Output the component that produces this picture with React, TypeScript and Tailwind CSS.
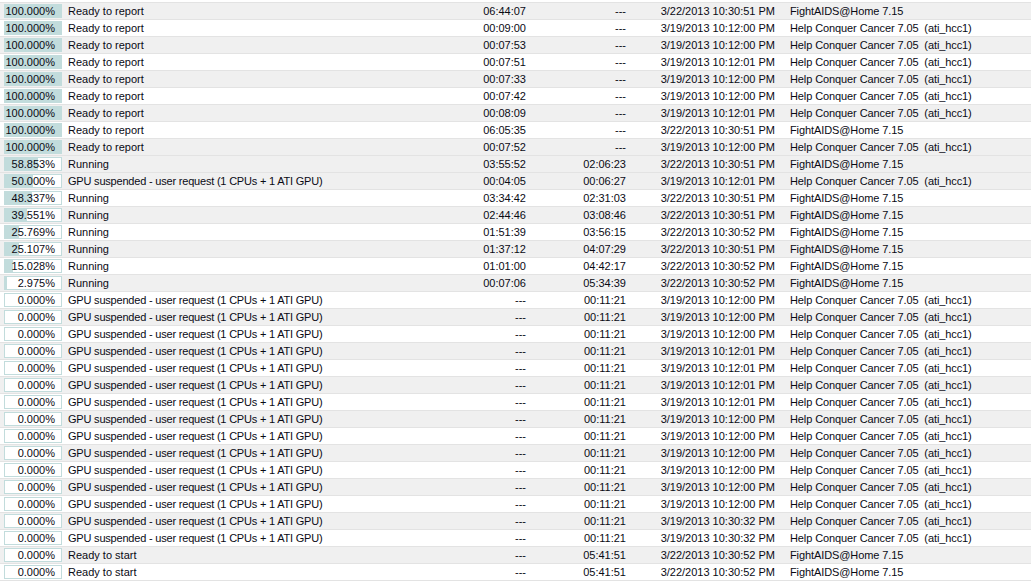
import React from "react";

type Row = [number, string, string, string, string, string];

const FA = "FightAIDS@Home 7.15";
const HCC = "Help Conquer Cancer 7.05  (ati_hcc1)";
const GPU = "GPU suspended - user request (1 CPUs + 1 ATI GPU)";
const RR = "Ready to report";

const rows: Row[] = [
  [100, RR, "06:44:07", "---", "3/22/2013 10:30:51 PM", FA],
  [100, RR, "00:09:00", "---", "3/19/2013 10:12:00 PM", HCC],
  [100, RR, "00:07:53", "---", "3/19/2013 10:12:00 PM", HCC],
  [100, RR, "00:07:51", "---", "3/19/2013 10:12:01 PM", HCC],
  [100, RR, "00:07:33", "---", "3/19/2013 10:12:00 PM", HCC],
  [100, RR, "00:07:42", "---", "3/19/2013 10:12:00 PM", HCC],
  [100, RR, "00:08:09", "---", "3/19/2013 10:12:01 PM", HCC],
  [100, RR, "06:05:35", "---", "3/22/2013 10:30:51 PM", FA],
  [100, RR, "00:07:52", "---", "3/19/2013 10:12:00 PM", HCC],
  [58.853, "Running", "03:55:52", "02:06:23", "3/22/2013 10:30:51 PM", FA],
  [50, GPU, "00:04:05", "00:06:27", "3/19/2013 10:12:01 PM", HCC],
  [48.337, "Running", "03:34:42", "02:31:03", "3/22/2013 10:30:51 PM", FA],
  [39.551, "Running", "02:44:46", "03:08:46", "3/22/2013 10:30:51 PM", FA],
  [25.769, "Running", "01:51:39", "03:56:15", "3/22/2013 10:30:52 PM", FA],
  [25.107, "Running", "01:37:12", "04:07:29", "3/22/2013 10:30:51 PM", FA],
  [15.028, "Running", "01:01:00", "04:42:17", "3/22/2013 10:30:52 PM", FA],
  [2.975, "Running", "00:07:06", "05:34:39", "3/22/2013 10:30:52 PM", FA],
  [0, GPU, "---", "00:11:21", "3/19/2013 10:12:00 PM", HCC],
  [0, GPU, "---", "00:11:21", "3/19/2013 10:12:00 PM", HCC],
  [0, GPU, "---", "00:11:21", "3/19/2013 10:12:00 PM", HCC],
  [0, GPU, "---", "00:11:21", "3/19/2013 10:12:01 PM", HCC],
  [0, GPU, "---", "00:11:21", "3/19/2013 10:12:01 PM", HCC],
  [0, GPU, "---", "00:11:21", "3/19/2013 10:12:01 PM", HCC],
  [0, GPU, "---", "00:11:21", "3/19/2013 10:12:01 PM", HCC],
  [0, GPU, "---", "00:11:21", "3/19/2013 10:12:00 PM", HCC],
  [0, GPU, "---", "00:11:21", "3/19/2013 10:12:00 PM", HCC],
  [0, GPU, "---", "00:11:21", "3/19/2013 10:12:00 PM", HCC],
  [0, GPU, "---", "00:11:21", "3/19/2013 10:12:00 PM", HCC],
  [0, GPU, "---", "00:11:21", "3/19/2013 10:12:00 PM", HCC],
  [0, GPU, "---", "00:11:21", "3/19/2013 10:12:00 PM", HCC],
  [0, GPU, "---", "00:11:21", "3/19/2013 10:30:32 PM", HCC],
  [0, GPU, "---", "00:11:21", "3/19/2013 10:30:32 PM", HCC],
  [0, "Ready to start", "---", "05:41:51", "3/22/2013 10:30:52 PM", FA],
  [0, "Ready to start", "---", "05:41:51", "3/22/2013 10:30:52 PM", FA],
];

function Bar({ pct }: { pct: number }) {
  return (
    <div className="relative w-[58px] h-[14px] border border-[#c2dcdc] bg-white shrink-0">
      <div
        className="absolute left-0 top-0 bottom-0 bg-[#c2dcdc]"
        style={{ width: `${pct}%` }}
      />
      <div className="relative h-full flex items-center justify-end pr-[6px] leading-none">
        {pct.toFixed(3)}%
      </div>
    </div>
  );
}

export default function App() {
  return (
    <div
      className="w-[1031px] h-[582px] bg-white text-[11px] text-[#0a0a14] overflow-hidden pt-[2px]"
      style={{ fontFamily: '"Liberation Sans", Arial, sans-serif' }}
    >
      <div className="border-t border-[#e3e3e3]">
        {rows.map((r, i) => {
          const gray = i % 2 === 0 || i === 9;
          return (
            <div
              key={i}
              className={`flex items-center h-[17px] border-b border-[#e3e3e3] whitespace-pre ${
                gray ? "bg-[#f0f0f0]" : "bg-white"
              }`}
            >
              <div className="pl-[4px]">
                <Bar pct={r[0]} />
              </div>
              <div
                className={`ml-[6px] w-[400px] ${
                  r[1] === GPU ? "tracking-[-0.2px]" : ""
                }`}
              >
                {r[1]}
              </div>
              <div className="w-[58px] text-right">{r[2]}</div>
              <div className="w-[100px] text-right">{r[3]}</div>
              <div className="w-[149px] text-right">{r[4]}</div>
              <div className="pl-[15px] tracking-[-0.1px]">{r[5]}</div>
            </div>
          );
        })}
      </div>
    </div>
  );
}
